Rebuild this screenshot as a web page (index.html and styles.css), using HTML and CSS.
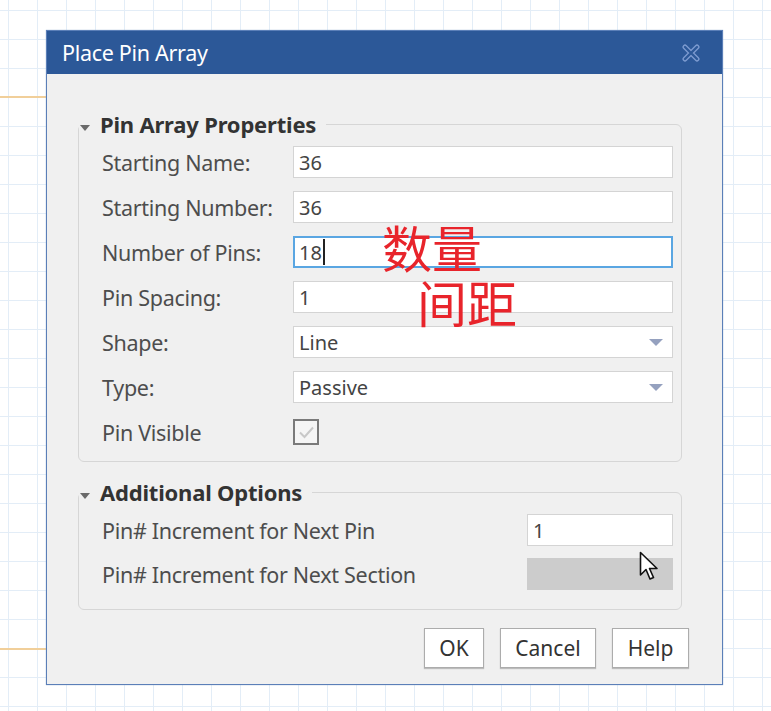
FILE: index.html
```html
<!DOCTYPE html>
<html>
<head>
<meta charset="utf-8">
<link rel="stylesheet" href="styles.css">
</head>
<body>
<div class="canvas">
  <div class="wire wire-top"></div>
  <div class="wire wire-bottom"></div>
  <div class="dialog">
    <div class="titlebar">
      <span class="title">Place Pin Array</span>
      <svg class="close" width="18" height="18" viewBox="0 0 18 18">
        <path d="M3 3 L15 15 M15 3 L3 15" stroke="#7d9bd0" stroke-width="5" stroke-linecap="round" fill="none"/>
        <path d="M3 3 L15 15 M15 3 L3 15" stroke="#2c5898" stroke-width="2.4" stroke-linecap="round" fill="none"/>
      </svg>
    </div>
    <div class="content">
      <fieldset class="group group-props">
        <legend class="legend"><span class="caret"></span><span class="legend-text">Pin Array Properties</span></legend>
        <div class="rows">
          <label class="label">Starting Name:</label>
          <div class="field">36</div>
          <label class="label">Starting Number:</label>
          <div class="field">36</div>
          <label class="label">Number of Pins:</label>
          <div class="field focused">18<span class="caret-line"></span></div>
          <label class="label">Pin Spacing:</label>
          <div class="field">1</div>
          <label class="label">Shape:</label>
          <div class="field select">Line<span class="arrow"></span></div>
          <label class="label">Type:</label>
          <div class="field select">Passive<span class="arrow"></span></div>
          <label class="label">Pin Visible</label>
          <div class="check-cell">
            <span class="checkbox">
              <svg width="21" height="21" viewBox="0 0 21 21"><path d="M4 10.5 L8.5 15 L17 5.5" stroke="#c8c8c8" stroke-width="2" fill="none"/></svg>
            </span>
          </div>
        </div>
      </fieldset>

      <fieldset class="group group-opts">
        <legend class="legend"><span class="caret"></span><span class="legend-text">Additional Options</span></legend>
        <div class="rows2">
          <label class="label">Pin# Increment for Next Pin</label>
          <div class="field small">1</div>
          <label class="label">Pin# Increment for Next Section</label>
          <div class="field small disabled"></div>
        </div>
      </fieldset>

      <div class="buttons">
        <button class="btn btn-ok">OK</button>
        <button class="btn btn-cancel">Cancel</button>
        <button class="btn btn-help">Help</button>
      </div>
    </div>
    <div class="note note-1">数量</div>
    <div class="note note-2">间距</div>
    <svg class="cursor" width="22" height="32" viewBox="0 0 22 32">
      <path d="M1.5 1.5 L1.5 24 L7 18.5 L11 28 L14.5 26.5 L10.5 17.5 L18 17.5 Z" fill="#ffffff" stroke="#111111" stroke-width="1.6" stroke-linejoin="round"/>
    </svg>
  </div>
</div>
</body>
</html>
```
FILE: styles.css
```css
html, body {
  margin: 0;
  padding: 0;
}
body {
  width: 771px;
  height: 711px;
  overflow: hidden;
  background-color: #ffffff;
  background-image:
    linear-gradient(to right, #e3edf7 1px, transparent 1px),
    linear-gradient(to bottom, #e3edf7 1px, transparent 1px);
  background-size: 29px 29px;
  background-position: 8px 10px;
  font-family: "Noto Sans", "Open Sans", sans-serif;
}
.canvas {
  position: relative;
  padding: 30px 0 0 46px;
}
.wire {
  position: absolute;
  left: 0;
  width: 46px;
  height: 2px;
  background: #f1cf9a;
}
.wire-top { top: 96px; }
.wire-bottom { top: 648px; }

.dialog {
  position: relative;
  width: 675px;
  height: 653px;
  border: 1px solid #5b7fb8;
  background: #f0f0f0;
  box-shadow: 0 0 1px #8aa3c8;
}
.titlebar {
  height: 43px;
  background: #2c5898;
  display: flex;
  align-items: center;
  justify-content: space-between;
  padding: 0 22px 0 15px;
}
.title {
  color: #ffffff;
  font-size: 21.5px;
  letter-spacing: -0.3px;
  margin-top: -1px;
}
.close { display: block; }

.content {
  padding: 36px 40px 0 31px;
}
.group {
  margin: 0;
  padding: 0;
  border: 1px solid #d6d6d6;
  border-radius: 6px;
  min-width: 0;
}
.legend {
  padding: 0 10px 0 1px;
  margin-left: 0;
  display: flex;
  align-items: flex-end;
  gap: 10px;
}
.caret {
  width: 0;
  height: 0;
  border-left: 5px solid transparent;
  border-right: 5px solid transparent;
  border-top: 6px solid #6a6a6a;
  margin-bottom: 7px;
}
.legend-text {
  font-size: 22px;
  font-weight: 700;
  color: #333333;
  letter-spacing: -0.2px;
  line-height: 28px;
}
.rows {
  display: grid;
  grid-template-columns: 191px 380px;
  grid-auto-rows: 32px;
  row-gap: 13px;
  padding: 8px 0 13px 23px;
}
.label {
  font-size: 21.5px;
  color: #4d4d4d;
  display: flex;
  align-items: center;
  letter-spacing: -0.3px;
  white-space: nowrap;
}
.field {
  box-sizing: border-box;
  height: 32px;
  background: #ffffff;
  border: 1px solid #d4d4d4;
  font-size: 20px;
  color: #444444;
  padding: 0 5px;
  display: flex;
  align-items: center;
  position: relative;
}
.field.focused {
  border: 2px solid #5aa6e2;
  padding-left: 4px;
}
.caret-line {
  display: inline-block;
  width: 2px;
  height: 26px;
  background: #222222;
  margin-left: 1px;
}
.select .arrow {
  position: absolute;
  right: 9px;
  top: 12px;
  width: 0;
  height: 0;
  border-left: 7px solid transparent;
  border-right: 7px solid transparent;
  border-top: 7px solid #95a1bf;
}
.check-cell {
  display: flex;
  align-items: center;
}
.checkbox {
  box-sizing: border-box;
  width: 26px;
  height: 26px;
  border: 2px solid #7a7a7a;
  background: #f5f5f5;
  display: flex;
  align-items: center;
  justify-content: center;
}
.checkbox svg { display: block; }

.group-opts {
  margin-top: 16px;
}
.rows2 {
  display: grid;
  grid-template-columns: 425px 146px;
  grid-auto-rows: 32px;
  row-gap: 12px;
  padding: 8px 0 19px 23px;
}
.field.disabled {
  background: #cccccc;
  border-color: #cccccc;
}
.buttons {
  display: flex;
  justify-content: flex-end;
  gap: 16px;
  margin-top: 18px;
  margin-right: -7px;
}
.btn {
  height: 40px;
  background: #ffffff;
  border: 1px solid #acacac;
  box-shadow: 0 1px 1px #bcbcbc;
  font-family: "Noto Sans", "Open Sans", sans-serif;
  font-size: 21px;
  color: #333333;
  padding: 0;
  border-radius: 0;
}
.btn-ok { width: 60px; }
.btn-cancel { width: 96px; }
.btn-help { width: 77px; }

.note {
  position: absolute;
  font-family: "Noto Sans CJK SC", sans-serif;
  font-size: 50px;
  line-height: 1;
  color: #e8242b;
}
.note-1 { left: 335px; top: 190px; }
.note-2 { left: 370px; top: 245px; }
.cursor {
  position: absolute;
  left: 592px;
  top: 520px;
}
```
